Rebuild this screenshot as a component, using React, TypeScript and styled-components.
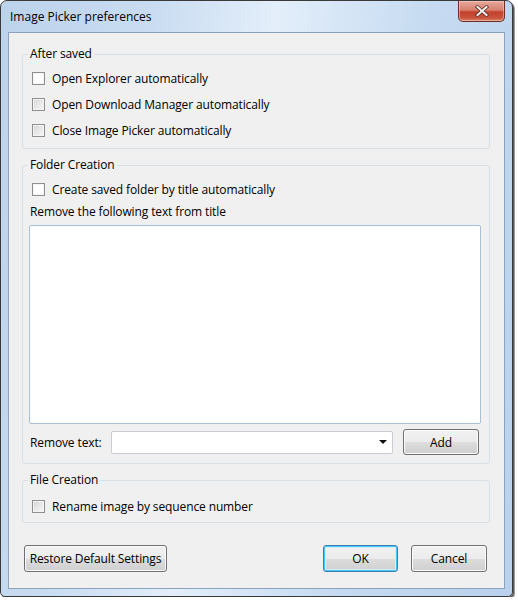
import React from "react";
import styled, { createGlobalStyle } from "styled-components";

const Global = createGlobalStyle`
  html, body { margin: 0; padding: 0; background: #ffffff; }
  body { font-family: "Open Sans", "Noto Sans", sans-serif; }
  * { box-sizing: border-box; }
`;

const Window = styled.div`
  width: 513px;
  height: 597px;
  margin: 0;
  border: 1px solid #3a3a3a;
  border-radius: 7px 7px 5px 5px;
  box-shadow: 1px 1px 0 #5a5a5a, 2px 2px 0 #9a9a9a;
  background: linear-gradient(100deg, #bcd3ec 0%, #c9dcf1 25%, #e3eefa 45%, #c6dbf1 70%, #b9d1ec 100%);
  padding: 0 7px 7px 7px;
  display: flex;
  flex-direction: column;
`;

const TitleBar = styled.div`
  height: 31px;
  display: flex;
  align-items: flex-start;
  justify-content: space-between;
  padding-left: 2px;
`;

const TitleText = styled.span`
  font-size: 12px;
  color: #000;
  line-height: 16px;
  margin-top: 8px;
`;

const CloseButton = styled.div`
  width: 47px;
  height: 21px;
  border: 1px solid #6e2d25;
  border-top: none;
  border-radius: 0 0 5px 5px;
  background: linear-gradient(to bottom, #e6a99c 0%, #d7806f 45%, #c2412b 55%, #c9543c 85%, #d98a6c 100%);
  box-shadow: inset 0 0 0 1px rgba(255, 220, 210, 0.45);
  display: flex;
  align-items: center;
  justify-content: center;
`;

const Client = styled.div`
  flex: 1;
  border: 1px solid #8da2bd;
  background: #f0f0f0;
  padding: 13px 14px 12px 13px;
  display: flex;
  flex-direction: column;
  letter-spacing: -0.12px;
`;

const Group = styled.fieldset<{ $gap?: number }>`
  margin: ${(p) => p.$gap ?? 0}px 0 0 0;
  padding: 0;
  border: 1px solid #d8dfe5;
  border-radius: 3px;
  min-width: 0;
`;

const Legend = styled.legend`
  margin-left: 5px;
  padding: 0 2px;
  font-size: 12px;
  line-height: 16px;
  color: #000;
`;

const GroupBody = styled.div<{ $pt: number; $pb: number }>`
  padding: ${(p) => p.$pt}px 8px ${(p) => p.$pb}px 6px;
  display: flex;
  flex-direction: column;
`;

const CheckRow = styled.label`
  height: 26px;
  display: flex;
  align-items: center;
  gap: 7px;
  padding-left: 3px;
  font-size: 12px;
  color: #000;
`;

const Box = styled.span<{ $hot?: boolean }>`
  width: 13px;
  height: 13px;
  border: 1px solid #8e8f8f;
  background: ${(p) =>
    p.$hot
      ? "#ffffff"
      : "linear-gradient(135deg, #d4d4d4 0%, #e8e8e8 50%, #f6f6f6 100%)"};
  box-shadow: inset 0 0 0 1px #f4f4f4;
  flex: none;
`;

const Caption = styled.div`
  font-size: 12px;
  line-height: 16px;
  color: #000;
  margin-top: 2px;
  padding-left: 1px;
`;

const TextArea = styled.div`
  margin-top: 5px;
  height: 199px;
  background: #ffffff;
  border: 1px solid #abc0d5;
  border-radius: 2px;
`;

const RemoveRow = styled.div`
  margin-top: 5px;
  height: 26px;
  display: flex;
  align-items: center;
  padding-left: 1px;
`;

const RowLabel = styled.span`
  font-size: 12px;
  color: #000;
  width: 81px;
  flex: none;
`;

const Combo = styled.div`
  width: 282px;
  height: 23px;
  background: #ffffff;
  border: 1px solid #c9ccd2;
  border-radius: 2px;
  display: flex;
  align-items: center;
  justify-content: flex-end;
  padding-right: 5px;
`;

const Arrow = styled.span`
  width: 0;
  height: 0;
  border-left: 4px solid transparent;
  border-right: 4px solid transparent;
  border-top: 4px solid #111;
`;

const Button = styled.button<{ $w: number; $h?: number; $default?: boolean }>`
  width: ${(p) => p.$w}px;
  height: ${(p) => p.$h ?? 27}px;
  flex: none;
  font-family: "Open Sans", "Noto Sans", sans-serif;
  font-size: 12px;
  letter-spacing: -0.12px;
  color: #000;
  padding: 0;
  border: 1px solid ${(p) => (p.$default ? "#3c7fb1" : "#707070")};
  border-radius: 3px;
  background: linear-gradient(to bottom, #f2f2f2 0%, #ebebeb 50%, #dddddd 51%, #cfcfcf 100%);
  box-shadow: ${(p) =>
    p.$default
      ? "inset 0 0 0 1px #48c6f4, inset 0 0 0 2px #d6eefb"
      : "inset 0 0 0 1px #fbfbfb"};
`;

const AddButton = styled(Button)`
  margin-left: 10px;
`;

const Footer = styled.div`
  margin-top: 22px;
  display: flex;
  align-items: center;
  padding: 0 3px 0 2px;
  gap: 13px;
`;

const Spacer = styled.div`
  flex: 1;
`;

export default function App() {
  return (
    <>
      <Global />
      <Window>
        <TitleBar>
          <TitleText>Image Picker preferences</TitleText>
          <CloseButton>
            <svg width="14" height="12" viewBox="0 0 14 12">
              <path
                d="M2.5 2 L11.5 10 M11.5 2 L2.5 10"
                stroke="#5a2a22"
                strokeWidth="3.6"
                strokeLinecap="square"
              />
              <path
                d="M2.5 2 L11.5 10 M11.5 2 L2.5 10"
                stroke="#f2f2f2"
                strokeWidth="2"
                strokeLinecap="square"
              />
            </svg>
          </CloseButton>
        </TitleBar>
        <Client>
          <Group>
            <Legend>After saved</Legend>
            <GroupBody $pt={3} $pb={5}>
              <CheckRow>
                <Box $hot />
                Open Explorer automatically
              </CheckRow>
              <CheckRow>
                <Box />
                Open Download Manager automatically
              </CheckRow>
              <CheckRow>
                <Box />
                Close Image Picker automatically
              </CheckRow>
            </GroupBody>
          </Group>
          <Group $gap={8}>
            <Legend>Folder Creation</Legend>
            <GroupBody $pt={3} $pb={8}>
              <CheckRow>
                <Box $hot />
                Create saved folder by title automatically
              </CheckRow>
              <Caption>Remove the following text from title</Caption>
              <TextArea />
              <RemoveRow>
                <RowLabel>Remove text:</RowLabel>
                <Combo>
                  <Arrow />
                </Combo>
                <AddButton $w={76} $h={26}>
                  Add
                </AddButton>
              </RemoveRow>
            </GroupBody>
          </Group>
          <Group $gap={8}>
            <Legend>File Creation</Legend>
            <GroupBody $pt={5} $pb={3}>
              <CheckRow>
                <Box />
                Rename image by sequence number
              </CheckRow>
            </GroupBody>
          </Group>
          <Footer>
            <Button $w={143}>Restore Default Settings</Button>
            <Spacer />
            <Button $w={75} $default>
              OK
            </Button>
            <Button $w={76}>Cancel</Button>
          </Footer>
        </Client>
      </Window>
    </>
  );
}
